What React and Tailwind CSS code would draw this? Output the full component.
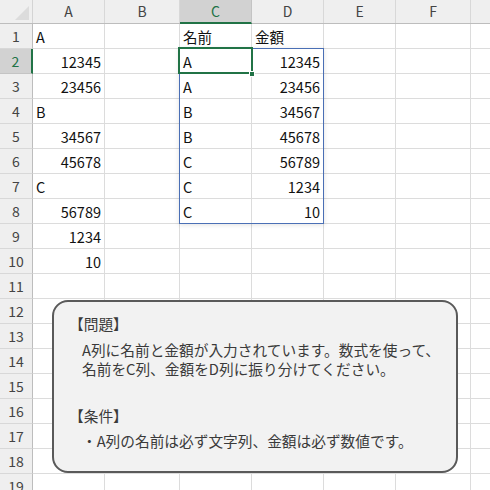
import React from "react";

const font = { fontFamily: '"Noto Sans CJK JP", "Noto Sans", sans-serif' };

const cols = [
  { key: "A", w: "w-[72px]" },
  { key: "B", w: "w-[75px]" },
  { key: "C", w: "w-[72px]" },
  { key: "D", w: "w-[72px]" },
  { key: "E", w: "w-[72px]" },
  { key: "F", w: "w-[75px]" },
  { key: "G", w: "w-[72px]" },
];

// row -> { col: [value, align] }
const data = {
  1: { A: ["A", "l"], C: ["名前", "l"], D: ["金額", "l"] },
  2: { A: ["12345", "r"], C: ["A", "l"], D: ["12345", "r"] },
  3: { A: ["23456", "r"], C: ["A", "l"], D: ["23456", "r"] },
  4: { A: ["B", "l"], C: ["B", "l"], D: ["34567", "r"] },
  5: { A: ["34567", "r"], C: ["B", "l"], D: ["45678", "r"] },
  6: { A: ["45678", "r"], C: ["C", "l"], D: ["56789", "r"] },
  7: { A: ["C", "l"], C: ["C", "l"], D: ["1234", "r"] },
  8: { A: ["56789", "r"], C: ["C", "l"], D: ["10", "r"] },
  9: { A: ["1234", "r"] },
  10: { A: ["10", "r"] },
};

const rows = Array.from({ length: 19 }, (_, i) => i + 1);

function HeaderRow() {
  return (
    <div className="flex h-[24px] bg-[#efefef] border-b border-[#bdbdbd]">
      <div className="w-[33px] shrink-0 border-r border-[#d4d4d4] relative">
        <svg width="33" height="23" className="absolute left-0 top-0">
          <polygon points="15,20 29,20 29,6" fill="#dcdcdc" />
        </svg>
      </div>
      {cols.map((c) =>
        c.key === "C" ? (
          <div
            key={c.key}
            className={`${c.w} shrink-0 bg-[#d2d2d2] border-r border-[#c4c4c4] border-b-2 border-b-[#217346] text-[#217346] text-[14px] flex items-center justify-center -mb-[1px]`}
          >
            {c.key}
          </div>
        ) : (
          <div
            key={c.key}
            className={`${c.w} shrink-0 border-r border-[#d8d8d8] text-[#444] text-[14px] flex items-center justify-center`}
          >
            {c.key === "G" ? "" : c.key}
          </div>
        )
      )}
    </div>
  );
}

function Row({ n }) {
  const cells = data[n] || {};
  const sel = n === 2;
  return (
    <div className="flex h-[25px]">
      <div
        className={
          sel
            ? "w-[33px] shrink-0 bg-[#d2d2d2] border-r-2 border-[#217346] border-b border-b-[#c4c4c4] text-[#217346] text-[14px] flex items-center justify-center"
            : "w-[33px] shrink-0 bg-[#efefef] border-r border-[#bdbdbd] border-b border-b-[#d8d8d8] text-[#444] text-[14px] flex items-center justify-center"
        }
      >
        {n}
      </div>
      {cols.map((c) => {
        const v = cells[c.key];
        return (
          <div
            key={c.key}
            className={`${c.w} shrink-0 border-r border-b border-[#dcdcdc] flex items-center pt-[2px] px-[3px] text-[14.5px] text-[#111] ${
              v && v[1] === "r" ? "justify-end" : "justify-start"
            }`}
          >
            {v ? v[0] : ""}
          </div>
        );
      })}
    </div>
  );
}

export default function App() {
  return (
    <div className="relative w-[490px] h-[490px] overflow-hidden bg-white" style={font}>
      <HeaderRow />
      {rows.map((n) => (
        <Row key={n} n={n} />
      ))}

      {/* spill range */}
      <div className="absolute left-[179px] top-[48px] w-[145px] h-[176px] border border-[#4a6fb5] shadow-[0_1px_5px_rgba(0,0,0,0.12)]" />

      {/* active cell */}
      <div className="absolute left-[178px] top-[47px] w-[75px] h-[27px] border-2 border-[#217346]" />
      <div className="absolute left-[249px] top-[71px] w-[6px] h-[6px] bg-[#217346] border border-white" />

      {/* text box */}
      <div className="absolute left-[52px] top-[300px] w-[406px] h-[173px] rounded-[16px] border-2 border-[#5a5a5a] bg-[#f2f2f2] text-[14.7px] leading-[19px] text-[#3a3a3a] pt-[12px]">
        <div className="pl-[15px]">【問題】</div>
        <div className="pl-[28px] mt-[7px]">A列に名前と金額が入力されています。数式を使って、</div>
        <div className="pl-[28px]">名前をC列、金額をD列に振り分けてください。</div>
        <div className="pl-[15px] mt-[28px]">【条件】</div>
        <div className="pl-[28px] mt-[6px]">・A列の名前は必ず文字列、金額は必ず数値です。</div>
      </div>
    </div>
  );
}
